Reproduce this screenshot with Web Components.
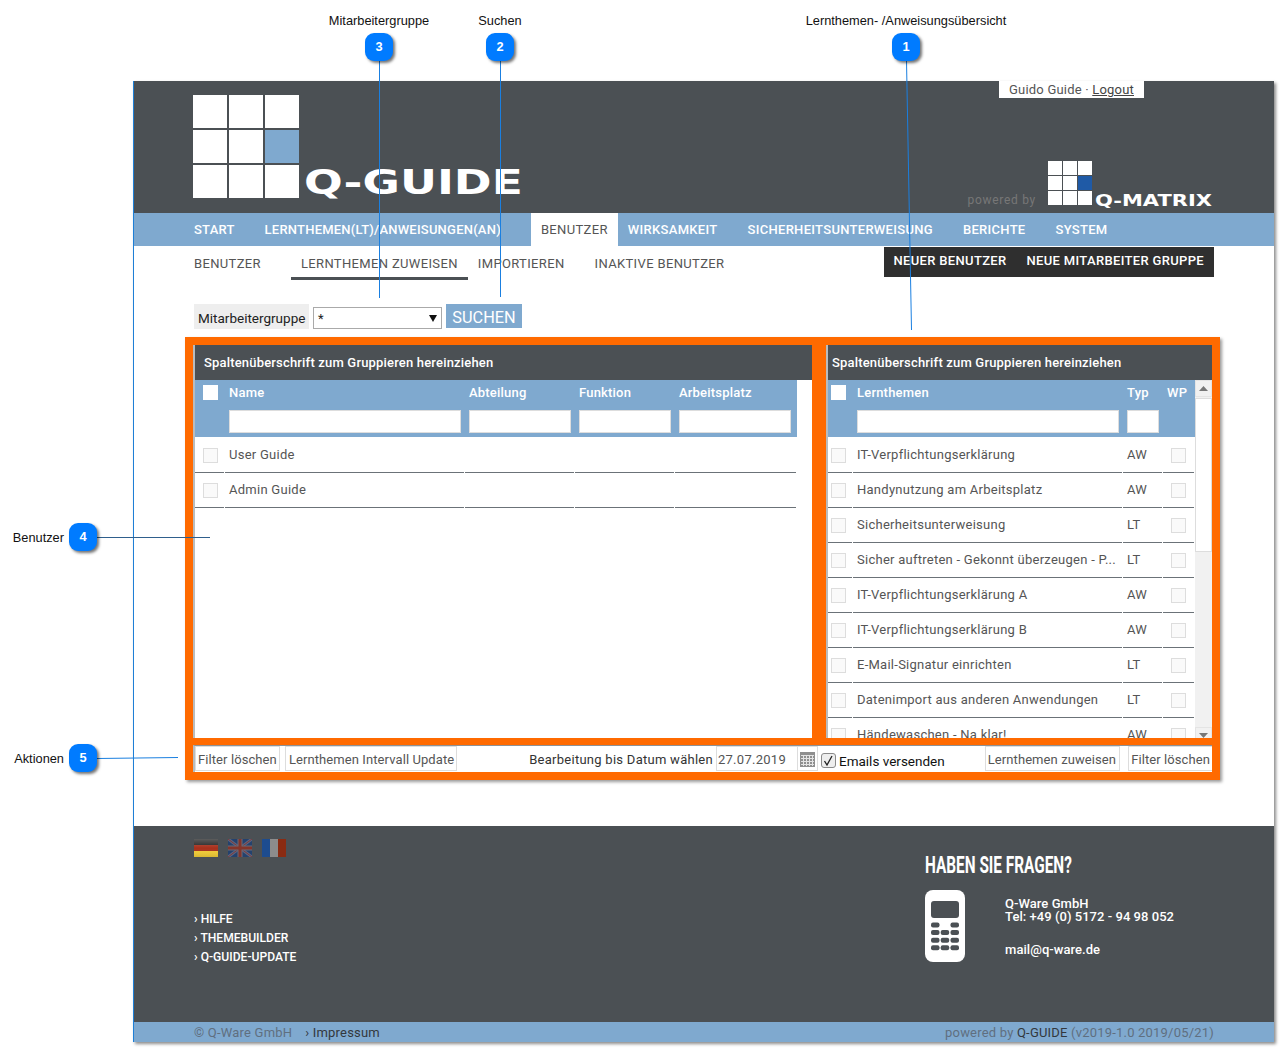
<!DOCTYPE html>
<html lang="de">
<head>
<meta charset="utf-8">
<title>Q-GUIDE</title>
<style>
    html, body { margin: 0; padding: 0; background: #fff; }
    body { font-family: Roboto, "Liberation Sans", sans-serif; font-size: 13px; color: #555; height: 1050px; overflow: hidden; position: relative; }
</style>
</head>
<body>

<q-frame>
    <q-header></q-header>
    <q-nav>
        <q-nav-item>Start</q-nav-item>
        <q-nav-item>Lernthemen(LT)/Anweisungen(AN)</q-nav-item>
        <q-nav-item active>Benutzer</q-nav-item>
        <q-nav-item flush>Wirksamkeit</q-nav-item>
        <q-nav-item>Sicherheitsunterweisung</q-nav-item>
        <q-nav-item>Berichte</q-nav-item>
        <q-nav-item>System</q-nav-item>
    </q-nav>
    <q-subnav>
        <q-tab>Benutzer</q-tab>
        <q-tab active>Lernthemen zuweisen</q-tab>
        <q-tab>Importieren</q-tab>
        <q-tab>Inaktive Benutzer</q-tab>
        <span slot="actions">Neuer Benutzer</span>
        <span slot="actions">Neue Mitarbeiter Gruppe</span>
    </q-subnav>
    <q-search></q-search>

    <q-workspace>
        <q-grid style="--cols: 30px 240px 110px 100px 122px; --gutter: 8px; --lead: 9px" title="Spaltenüberschrift zum Gruppieren hereinziehen">
            <q-row head><q-check white></q-check><span>Name</span><span>Abteilung</span><span>Funktion</span><span>Arbeitsplatz</span></q-row>
            <q-row filter><span></span><q-filter></q-filter><q-filter></q-filter><q-filter></q-filter><q-filter style="padding-right:6px"></q-filter></q-row>
            <q-row slot="rows"><q-check></q-check><span>User Guide</span><span></span><span></span><span></span></q-row>
            <q-row slot="rows"><q-check></q-check><span>Admin Guide</span><span></span><span></span><span></span></q-row>
        </q-grid>

        <q-grid scroll style="--cols: 25px 270px 40px 32px; --gutter: 3px; --lead: 4px" title="Spaltenüberschrift zum Gruppieren hereinziehen">
            <q-row head><q-check white></q-check><span>Lernthemen</span><span>Typ</span><span>WP</span></q-row>
            <q-row filter><span></span><q-filter></q-filter><q-filter></q-filter><span></span></q-row>
            <q-row slot="rows"><q-check></q-check><span>IT-Verpflichtungserklärung</span><span>AW</span><q-check wp></q-check></q-row>
            <q-row slot="rows"><q-check></q-check><span>Handynutzung am Arbeitsplatz</span><span>AW</span><q-check wp></q-check></q-row>
            <q-row slot="rows"><q-check></q-check><span>Sicherheitsunterweisung</span><span>LT</span><q-check wp></q-check></q-row>
            <q-row slot="rows"><q-check></q-check><span>Sicher auftreten - Gekonnt überzeugen - P...</span><span>LT</span><q-check wp></q-check></q-row>
            <q-row slot="rows"><q-check></q-check><span>IT-Verpflichtungserklärung A</span><span>AW</span><q-check wp></q-check></q-row>
            <q-row slot="rows"><q-check></q-check><span>IT-Verpflichtungserklärung B</span><span>AW</span><q-check wp></q-check></q-row>
            <q-row slot="rows"><q-check></q-check><span>E-Mail-Signatur einrichten</span><span>LT</span><q-check wp></q-check></q-row>
            <q-row slot="rows"><q-check></q-check><span>Datenimport aus anderen Anwendungen</span><span>LT</span><q-check wp></q-check></q-row>
            <q-row slot="rows"><q-check></q-check><span>Händewaschen - Na klar!</span><span>AW</span><q-check wp></q-check></q-row>
        </q-grid>

        <q-actions></q-actions>
    </q-workspace>

    <q-footer></q-footer>
    <q-bottom></q-bottom>
</q-frame>

<q-callouts>
    <q-callout x="379" y="47" n="3" label="Mitarbeitergruppe"></q-callout>
    <q-callout x="500" y="47" n="2" label="Suchen"></q-callout>
    <q-callout x="906" y="47" n="1" label="Lernthemen- /Anweisungsübersicht"></q-callout>
    <q-callout x="83" y="537" n="4" label="Benutzer" side="left"></q-callout>
    <q-callout x="83" y="758" n="5" label="Aktionen" side="left"></q-callout>
</q-callouts>

<script>
    const DARK = '#4b5054';
    const BLUE = '#7fa9cf';

    // every element here is only markup + styles, so one small base class is enough
    class QElement extends HTMLElement {
        connectedCallback() {
            if (!this.shadowRoot) {
                this.attachShadow({ mode: 'open' });
                this.shadowRoot.innerHTML = this.render();
            }
        }
        render() {
            return '<slot></slot>';
        }
    }

    class QFrame extends QElement {
        render() {
            return `
            <style>
                :host {
                    display: flex;
                    flex-direction: column;
                    width: 1140px;
                    height: 961px;
                    margin: 81px 0 0 133px;
                    border-left: 1px solid #1e7fd6;
                    background: #fff;
                    box-shadow: 2px 2px 3px rgba(0, 0, 0, .45);
                }
            </style>
            <slot></slot>`;
        }
    }

    class QHeader extends QElement {
        render() {
            const cell = (on) => `<i class="${on ? 'on' : ''}"></i>`;
            const squares = [0, 0, 0, 0, 0, 1, 0, 0, 0].map(cell).join('');
            return `
            <style>
                :host {
                    display: flex;
                    justify-content: space-between;
                    height: 132px;
                    box-sizing: border-box;
                    padding: 14px 61px 0 59px;
                    background: ${DARK};
                }
                .logo { display: flex; align-items: flex-end; height: 103px; }
                .squares { display: grid; gap: 2px; }
                .squares i { display: block; background: #fff; }
                .big { grid-template-columns: repeat(3, 34px); grid-template-rows: repeat(3, 33px); }
                .big .on { background: ${BLUE}; }
                .small { grid-template-columns: repeat(3, 14px); grid-template-rows: repeat(3, 14px); gap: 1px; }
                .small .on { background: #1f5aa6; }
                .word {
                    font-family: "DejaVu Sans", sans-serif;
                    font-weight: bold;
                    color: #fff;
                    transform-origin: left bottom;
                    white-space: nowrap;
                    display: block;
                }
                .guide { font-size: 34px; line-height: 25px; height: 25px; margin: 0 0 4px 5px; width: 218px; transform: translateY(1px) scaleX(1.34); }
                .side { display: flex; flex-direction: column; align-items: flex-end; margin-top: -14px; }
                .user {
                    margin-right: 69px;
                    background: #fff;
                    height: 17px;
                    line-height: 17px;
                    padding: 0 10px;
                    font-size: 13px;
                    letter-spacing: .2px;
                    color: #555;
                    white-space: nowrap;
                }
                .user u { color: #444; }
                .matrix { display: flex; align-items: flex-end; margin-top: 63px; }
                .by { color: #777; font-size: 12px; letter-spacing: .7px; margin-right: 12px; line-height: 14px; margin-bottom: -2px; }
                .qm { font-size: 15px; line-height: 11px; height: 11px; margin-left: 3px; width: 118px; transform: translateY(2px) scaleX(1.4); }
            </style>
            <div class="logo">
                <div class="squares big">${squares}</div>
                <span class="word guide">Q-GUIDE</span>
            </div>
            <div class="side">
                <div class="user">Guido Guide · <u>Logout</u></div>
                <div class="matrix">
                    <span class="by">powered by</span>
                    <div class="squares small">${squares}</div>
                    <span class="word qm">Q-MATRIX</span>
                </div>
            </div>`;
        }
    }

    class QNav extends QElement {
        render() {
            return `
            <style>
                :host {
                    display: flex;
                    height: 33px;
                    padding-left: 50px;
                    background: ${BLUE};
                }
            </style>
            <slot></slot>`;
        }
    }

    class QNavItem extends QElement {
        render() {
            return `
            <style>
                :host {
                    display: block;
                    padding: 0 10px;
                    margin-left: 10px;
                    line-height: 33px;
                    font-size: 13px;
                    font-weight: 500;
                    letter-spacing: .3px;
                    color: #fff;
                    text-transform: uppercase;
                    white-space: nowrap;
                }
                :host(:first-child) { margin-left: 0; letter-spacing: .22px; }
                :host(:nth-child(2)) { letter-spacing: .22px; }
                :host([active]) { background: #fff; color: #555; font-weight: 400; letter-spacing: .35px; margin-left: 20px; }
                :host([flush]) { margin-left: 0; }
            </style>
            <slot></slot>`;
        }
    }

    class QSubnav extends QElement {
        render() {
            return `
            <style>
                :host {
                    display: flex;
                    justify-content: space-between;
                    height: 58px;
                    box-sizing: border-box;
                    padding: 1px 60px 0 50px;
                }
                .tabs { display: flex; align-items: flex-start; }
                .actions {
                    display: flex;
                    gap: 20px;
                    height: 30px;
                    padding: 0 10px;
                    background: #2f2f2f;
                    align-items: center;
                    margin-bottom: 3px;
                }
                ::slotted(span) {
                    color: #fff;
                    font-size: 13px;
                    font-weight: 500;
                    letter-spacing: .33px;
                    text-transform: uppercase;
                    white-space: nowrap;
                    position: relative;
                    top: -2px;
                }
            </style>
            <div class="tabs"><slot></slot></div>
            <div class="actions"><slot name="actions"></slot></div>`;
        }
    }

    class QTab extends QElement {
        render() {
            return `
            <style>
                :host {
                    display: block;
                    box-sizing: border-box;
                    height: 33px;
                    padding: 0 10px;
                    margin-right: 10px;
                    line-height: 33px;
                    font-size: 13px;
                    letter-spacing: .35px;
                    color: #555;
                    text-transform: uppercase;
                    white-space: nowrap;
                }
                :host([active]) { border-bottom: 3px solid ${DARK}; margin-right: 0; }
                :host(:first-child) { margin-right: 20px; }
            </style>
            <slot></slot>`;
        }
    }

    class QSearch extends QElement {
        render() {
            return `
            <style>
                :host {
                    display: flex;
                    align-items: flex-start;
                    gap: 4px;
                    height: 33px;
                    padding-left: 60px;
                    box-sizing: border-box;
                }
                .label {
                    width: 115px;
                    height: 25px;
                    box-sizing: border-box;
                    padding: 6px 0 0 4px;
                    background: #eee;
                    color: #222;
                    font-size: 13.5px;
                    line-height: 16px;
                    white-space: nowrap;
                }
                .select {
                    display: flex;
                    justify-content: space-between;
                    align-items: center;
                    box-sizing: border-box;
                    width: 129px;
                    height: 22px;
                    margin-top: 3px;
                    padding: 0 4px;
                    border: 1px solid #aaa;
                    color: #222;
                    font-size: 13px;
                }
                .select svg { display: block; }
                button {
                    width: 76px;
                    height: 24px;
                    padding: 2px 0 0;
                    border: 0;
                    background: ${BLUE};
                    color: #fff;
                    font: 16.3px Roboto, sans-serif;
                }
            </style>
            <div class="label">Mitarbeitergruppe</div>
            <div class="select"><span>*</span><svg width="8" height="7"><path d="M0 0h8L4 7z" fill="#111"/></svg></div>
            <button>SUCHEN</button>`;
        }
    }

    class QWorkspace extends QElement {
        render() {
            return `
            <style>
                :host {
                    display: grid;
                    grid-template-columns: 619px 386px;
                    grid-template-rows: 393px 27px;
                    column-gap: 14px;
                    row-gap: 7px;
                    width: 1035px;
                    box-sizing: border-box;
                    padding: 8px;
                    margin-left: 51px;
                    background: #ff6a00;
                    box-shadow: 2px 2px 3px rgba(0, 0, 0, .4);
                }
                ::slotted(q-actions) { grid-column: 1 / 3; }
            </style>
            <slot></slot>`;
        }
    }

    class QGrid extends QElement {
        render() {
            const bar = this.hasAttribute('scroll') ? `
                <div class="bar">
                    <div class="btn"><svg width="9" height="5"><path d="M0 5L4.5 0 9 5z" fill="#777"/></svg></div>
                    <div class="thumb"></div>
                    <div class="space"></div>
                    <div class="btn"><svg width="9" height="5"><path d="M0 0h9L4.500 5z" fill="#777"/></svg></div>
                </div>` : '<div class="blank"></div>';
            return `
            <style>
                :host {
                    display: flex;
                    flex-direction: column;
                    overflow: hidden;
                    background: #fff;
                    border-left: 2px solid #b9bcbe;
                    box-sizing: border-box;
                }
                .title {
                    height: 35px;
                    flex: none;
                    box-sizing: border-box;
                    padding-left: var(--lead);
                    background: ${DARK};
                    color: #fff;
                    font-size: 13px;
                    font-weight: 500;
                    letter-spacing: .18px;
                    line-height: 36px;
                }
                .body { display: flex; flex: 1; min-height: 0; }
                .main { flex: 1; min-width: 0; }
                .head { height: 57px; margin-bottom: 1px; background: ${BLUE}; }
                .blank { width: 15px; flex: none; }
                .bar { width: 17px; flex: none; background: #f1f1f1; overflow: hidden; }
                .btn { display: flex; align-items: center; justify-content: center; height: 17px; box-sizing: border-box; border: 1px solid #e4e4e4; background: #f1f1f1; }
                .thumb { height: 154px; margin-top: 1px; box-sizing: border-box; background: #fff; border: 1px solid #ddd; }
                .space { height: 175px; }
            </style>
            <div class="title">${this.getAttribute('title')}</div>
            <div class="body">
                <div class="main">
                    <div class="head"><slot></slot></div>
                    <slot name="rows"></slot>
                </div>
                ${bar}
            </div>`;
        }
    }

    class QRow extends QElement {
        render() {
            return `
            <style>
                :host {
                    display: grid;
                    grid-template-columns: var(--cols);
                    height: 35px;
                    box-sizing: border-box;
                    font-size: 13px;
                    color: #555;
                    letter-spacing: .26px;
                }
                ::slotted(span) {
                    padding: 0 4px;
                    line-height: 34px;
                    white-space: nowrap;
                    overflow: hidden;
                }
                ::slotted(*) { border-bottom: 1px solid #6b7278; margin-right: 1px; }
                :host([head]) { height: 30px; color: #fff; font-weight: 500; letter-spacing: .2px; }
                :host([head]) ::slotted(span) { line-height: 25px; }
                :host([filter]) { height: 27px; }
                :host([head]) ::slotted(*), :host([filter]) ::slotted(*) { border-bottom: 0; margin-right: 0; }
            </style>
            <slot></slot>`;
        }
    }

    class QCheck extends QElement {
        render() {
            return `
            <style>
                :host { display: block; padding: 10px 0 0 var(--gutter); box-sizing: border-box; }
                i { display: block; width: 13px; height: 13px; border: 1px solid #ddd; background: #fafafa; }
                :host([wp]) { padding-left: 8px; }
                :host([white]) { padding-top: 5px; }
                :host([white]) i { background: #fff; border-color: #fff; }
            </style>
            <i></i>`;
        }
    }

    class QFilter extends QElement {
        render() {
            return `
            <style>
                :host { display: block; padding: 0 4px; }
                input {
                    display: block;
                    width: 100%;
                    height: 23px;
                    box-sizing: border-box;
                    margin: 0;
                    padding: 0 3px;
                    border: 1px solid #ddd;
                    background: #fff;
                    outline: 0;
                }
            </style>
            <input type="text">`;
        }
    }

    class QActions extends QElement {
        render() {
            return `
            <style>
                :host {
                    display: flex;
                    align-items: flex-start;
                    background: #fff;
                    border-left: 2px solid #b9bcbe;
                    border-top: 1px solid #8d9195;
                    box-sizing: border-box;
                    font-size: 13px;
                    color: #555;
                    white-space: nowrap;
                }
                .btn {
                    height: 25px;
                    box-sizing: border-box;
                    padding: 0 2px;
                    border: 1px solid #ddd;
                    line-height: 25px;
                    letter-spacing: .09px;
                }
                .label { margin-left: auto; line-height: 27px; color: #333; letter-spacing: .27px; }
                .date {
                    display: flex;
                    height: 25px;
                    width: 102px;
                    box-sizing: border-box;
                    margin-left: 3px;
                    border: 1px solid #ddd;
                    line-height: 25px;
                    letter-spacing: .27px;
                }
                .date span { width: 81px; box-sizing: border-box; padding-left: 1px; border-right: 1px solid #ddd; }
                .date svg { margin: 5px 0 0 2px; }
                .mail { display: flex; align-items: center; gap: 3px; height: 25px; margin: 2px 40px 0 3px; color: #111; font-size: 13.5px; }
                .tick { width: 15px; height: 15px; display: block; }
            </style>
            <div class="btn">Filter löschen</div>
            <div class="btn" style="margin-left:5px;padding-left:3px">Lernthemen Intervall Update</div>
            <div class="label">Bearbeitung bis Datum wählen</div>
            <div class="date">
                <span>27.07.2019</span>
                <svg width="15" height="15" viewBox="0 0 15 15">
                    <rect width="15" height="15" fill="#8f8f8f"/>
                    <path d="M1 3.500h13M1 6.500h13M1 9.500h13M1 12.500h13M3.500 3v11M6.500 3v11M9.500 3v11M12.500 3v11" stroke="#e4e4e4" stroke-width="1"/>
                </svg>
            </div>
            <div class="mail">
                <svg class="tick" viewBox="0 0 15 15">
                    <rect x=".5" y=".5" width="14" height="14" rx="2.500" fill="#eee" stroke="#8a8a8a"/>
                    <path d="M3.500 8l2.500 4 5-9" fill="none" stroke="#222" stroke-width="1.300"/>
                </svg>
                <span>Emails versenden</span>
            </div>
            <div class="btn" style="padding-right:3px">Lernthemen zuweisen</div>
            <div class="btn" style="margin-left:8px;border-right:0">Filter löschen</div>`;
        }
    }

    class QFooter extends QElement {
        render() {
            return `
            <style>
                :host {
                    display: flex;
                    justify-content: space-between;
                    height: 196px;
                    flex: none;
                    margin-top: 46px;
                    box-sizing: border-box;
                    padding: 13px 100px 0 60px;
                    background: ${DARK};
                    color: #fff;
                }
                .flags { display: flex; gap: 10px; }
                .flags svg { display: block; }
                ul { list-style: none; margin: 53px 0 0; padding: 0; font-size: 12.1px; font-weight: 500; line-height: 19px; }
                li::before { content: "› "; }
                h3 {
                    margin: 15px 0 0;
                    font-size: 24px;
                    line-height: 22px;
                    font-weight: 700;
                    transform: scaleX(.64);
                    transform-origin: left center;
                    white-space: nowrap;
                    width: 147px;
                }
                .contact { display: flex; margin-top: 14px; }
                .contact svg { display: block; margin-right: 40px; }
                .lines { font-size: 13px; font-weight: 500; line-height: 13px; letter-spacing: .04px; padding-top: 7px; }
                .lines p { margin: 0 0 20px; }
            </style>
            <div>
                <div class="flags">
                    <svg width="24" height="18" viewBox="0 0 24 18">
                        <defs><linearGradient id="shine" x1="0" y1="0" x2="0" y2="1">
                            <stop offset="0" stop-color="#fff" stop-opacity=".25"/>
                            <stop offset=".5" stop-color="#fff" stop-opacity="0"/>
                            <stop offset="1" stop-color="#000" stop-opacity=".1"/>
                        </linearGradient></defs>
                        <rect width="24" height="6" fill="#262626"/><rect y="6" width="24" height="6" fill="#a8301c"/><rect y="12" width="24" height="6" fill="#f2cc36"/>
                        <rect width="24" height="18" fill="url(#shine)"/>
                    </svg>
                    <svg width="24" height="18" viewBox="0 0 24 18">
                        <rect width="24" height="18" fill="#24426e"/>
                        <path d="M0 0l24 18M24 0L0 18" stroke="#5c6580" stroke-width="3"/>
                        <path d="M0 0l24 18M24 0L0 18" stroke="#7e3a38" stroke-width="1"/>
                        <path d="M12 0v18M0 9h24" stroke="#6a6a78" stroke-width="5"/>
                        <path d="M12 0v18M0 9h24" stroke="#84352a" stroke-width="3"/>
                    </svg>
                    <svg width="24" height="18" viewBox="0 0 24 18">
                        <rect width="8" height="18" fill="#1d4c8f"/><rect x="8" width="8" height="18" fill="#8c8c8c"/><rect x="16" width="8" height="18" fill="#8a2b12"/>
                    </svg>
                </div>
                <ul><li>HILFE</li><li>THEMEBUILDER</li><li>Q-GUIDE-UPDATE</li></ul>
            </div>
            <div>
                <h3>HABEN SIE FRAGEN?</h3>
                <div class="contact">
                    <svg width="40" height="72" viewBox="0 0 40 72">
                        <rect width="40" height="72" rx="8" fill="#fff"/>
                        <rect x="6" y="11" width="28" height="17" rx="3" fill="${DARK}"/>
                        <g fill="${DARK}">
                            <rect x="6" y="32.500" width="8.500" height="5" rx="2"/><rect x="25.500" y="32.500" width="8.500" height="5" rx="2"/>
                            <rect x="6" y="40" width="8.500" height="5" rx="2"/><rect x="15.700" y="40" width="8.500" height="5" rx="2"/><rect x="25.500" y="40" width="8.500" height="5" rx="2"/>
                            <rect x="6" y="47.700" width="8.500" height="5" rx="2"/><rect x="15.700" y="47.700" width="8.500" height="5" rx="2"/><rect x="25.500" y="47.700" width="8.500" height="5" rx="2"/>
                            <rect x="6" y="55.300" width="8.500" height="5" rx="2"/><rect x="15.700" y="55.300" width="8.500" height="5" rx="2"/><rect x="25.500" y="55.300" width="8.500" height="5" rx="2"/>
                        </g>
                    </svg>
                    <div class="lines">
                        <p>Q-Ware GmbH<br>Tel: +49 (0) 5172 - 94 98 052</p>
                        <p>mail@q-ware.de</p>
                    </div>
                </div>
            </div>`;
        }
    }

    class QBottom extends QElement {
        render() {
            return `
            <style>
                :host {
                    display: flex;
                    height: 20px;
                    flex: none;
                    box-sizing: border-box;
                    padding: 0 60px;
                    background: ${BLUE};
                    color: #5f6f80;
                    font-size: 13px;
                    line-height: 22px;
                    white-space: nowrap;
                    letter-spacing: .2px;
                }
                b { font-weight: 400; color: #33383d; }
                .right { margin-left: auto; }
            </style>
            <span>© Q-Ware GmbH</span>
            <span style="margin-left:13px"><b>› Impressum</b></span>
            <span class="right">powered by <b>Q-GUIDE</b> (v2019-1.0 2019/05/21)</span>`;
        }
    }

    // annotation layer, sits over the whole screenshot
    class QCallouts extends QElement {
        render() {
            return `
            <style>
                :host { display: block; position: absolute; left: 0; top: 0; width: 1283px; height: 1050px; pointer-events: none; }
                svg { position: absolute; left: 0; top: 0; }
            </style>
            <svg width="1283" height="1050" fill="none" stroke-width="1">
                <path d="M379.500 61V298M500.500 61V297M906.500 61L911.500 330M97 758.500L178 757.500" stroke="#1a7fe0"/>
                <path d="M97 537.500H210" stroke="#2f5f8c"/>
            </svg>
            <slot></slot>`;
        }
    }

    class QCallout extends QElement {
        render() {
            const left = this.getAttribute('side') === 'left';
            const x = this.getAttribute('x');
            const y = this.getAttribute('y');
            return `
            <style>
                :host { position: absolute; left: ${x}px; top: ${y}px; width: 0; height: 0; font: 12.8px "Liberation Sans", Arial, sans-serif; color: #111; }
                .badge {
                    position: absolute;
                    left: -14px;
                    top: -14px;
                    width: 28px;
                    height: 28px;
                    border-radius: 9px;
                    background: #007bff;
                    color: #fff;
                    font-weight: bold;
                    line-height: 28px;
                    text-align: center;
                    box-shadow: 2px 2px 3px rgba(0, 0, 0, .55);
                }
                .label { position: absolute; white-space: nowrap; line-height: 14px; }
                .top { top: -33px; left: 0; transform: translateX(-50%); }
                .left { right: 19px; top: -6px; }
            </style>
            <div class="label ${left ? 'left' : 'top'}">${this.getAttribute('label')}</div>
            <div class="badge">${this.getAttribute('n')}</div>`;
        }
    }

    customElements.define('q-frame', QFrame);
    customElements.define('q-header', QHeader);
    customElements.define('q-nav', QNav);
    customElements.define('q-nav-item', QNavItem);
    customElements.define('q-subnav', QSubnav);
    customElements.define('q-tab', QTab);
    customElements.define('q-search', QSearch);
    customElements.define('q-workspace', QWorkspace);
    customElements.define('q-grid', QGrid);
    customElements.define('q-row', QRow);
    customElements.define('q-check', QCheck);
    customElements.define('q-filter', QFilter);
    customElements.define('q-actions', QActions);
    customElements.define('q-footer', QFooter);
    customElements.define('q-bottom', QBottom);
    customElements.define('q-callouts', QCallouts);
    customElements.define('q-callout', QCallout);
</script>
</body>
</html>
